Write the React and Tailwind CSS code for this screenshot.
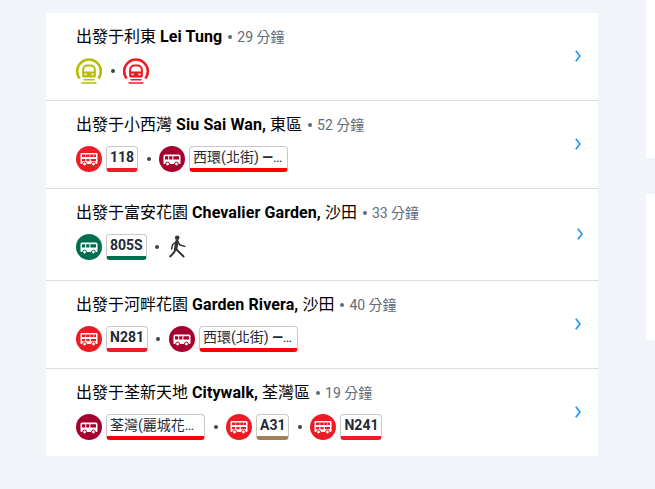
const FONT = "font-['Roboto','Noto_Sans_CJK_TC','Noto_Sans_CJK_SC',sans-serif]";

function MtrIcon({ color }) {
  return (
    <svg width="26" height="26" viewBox="0 0 26 26" fill="none">
      <path d="M3.6 20.5 A11.8 11.8 0 1 1 22.4 20.5" stroke={color} strokeWidth="2.6" />
      <path d="M7.2 15V11.5a4 4 0 0 1 4-4h3.6a4 4 0 0 1 4 4V15" stroke={color} strokeWidth="2" />
      <path d="M6.2 13.6h13.6v4.4a1.6 1.6 0 0 1-1.6 1.6H7.8a1.6 1.6 0 0 1-1.6-1.6z" fill={color} />
      <rect x="8.4" y="15.6" width="2.2" height="1.6" fill="#fff" />
      <rect x="15.4" y="15.6" width="2.2" height="1.6" fill="#fff" />
      <path d="M7.5 21.8h11M5.5 25h15" stroke={color} strokeWidth="1.6" />
    </svg>
  );
}

function DoubleDecker() {
  return (
    <svg width="26" height="26" viewBox="0 0 26 26" className="rounded-full bg-[#ed1c24]">
      <path d="M4.5 8.2a1.2 1.2 0 0 1 1.2-1.2h14.6a1.2 1.2 0 0 1 1.2 1.2v9a.8.8 0 0 1-.8.8H5.3a.8.8 0 0 1-.8-.8z" fill="#fff" />
      <path d="M6 8.6h14v2.4H6zM6 13h3.2v2.2H6zM10.4 13h3.2v2.2h-3.2zM14.8 13H20v2.2h-5.2z" fill="#ed1c24" />
      <path d="M9.6 8.6h.5v2.4h-.5zM13.7 8.6h.5v2.4h-.5zM17.4 8.6h.5v2.4h-.5z" fill="#fff" />
      <circle cx="8.6" cy="18" r="1.9" fill="#fff" stroke="#ed1c24" strokeWidth="1" />
      <circle cx="17.4" cy="18" r="1.9" fill="#fff" stroke="#ed1c24" strokeWidth="1" />
    </svg>
  );
}

function SingleDecker({ color }) {
  return (
    <svg width="26" height="26" viewBox="0 0 26 26" className="rounded-full" style={{ backgroundColor: color }}>
      <path d="M4.5 10a1.6 1.6 0 0 1 1.6-1.6h13.8a1.6 1.6 0 0 1 1.6 1.6v7.2a.8.8 0 0 1-.8.8H5.3a.8.8 0 0 1-.8-.8z" fill="#fff" />
      <path d="M6 10.2h3.2v3.2H6zM10.2 10.2h3.2v3.2h-3.2zM14.4 10.2H20v3.2h-5.6z" fill={color} />
      <circle cx="8.6" cy="18" r="1.9" fill="#fff" stroke={color} strokeWidth="1" />
      <circle cx="17.4" cy="18" r="1.9" fill="#fff" stroke={color} strokeWidth="1" />
    </svg>
  );
}

function Walker() {
  return (
    <svg width="20" height="26" viewBox="0 0 20 26" fill="none" stroke="#333" strokeLinecap="round" strokeLinejoin="round">
      <circle cx="9.2" cy="3.7" r="2.3" fill="#333" stroke="none" />
      <path d="M9 7.5 7.6 15" strokeWidth="3.4" />
      <path d="M7.6 15 6 18.5 2.2 22.5" strokeWidth="1.9" />
      <path d="M8 15 11 18 15.6 22.5" strokeWidth="1.9" />
      <path d="M9.8 8 12 11l4.8 1.4" strokeWidth="1.5" />
      <path d="M8 8 4.6 10.6 3.6 15" strokeWidth="1.5" />
    </svg>
  );
}

function Chip({ children, bar, long }) {
  return (
    <span
      className={`ml-1 block h-[26px] rounded-[4px] border border-[#c9c9c9] border-b-[4px] bg-white px-[3px] text-[14px] leading-[21px] text-[#222b36] ${bar} ${
        long ? "w-[99px] truncate font-normal" : "font-bold"
      }`}
    >
      {children}
    </span>
  );
}

function Dot() {
  return (
    <span className="mx-[8px] flex h-[26px] w-[5px] items-center justify-center">
      <span className="size-[4px] rounded-full bg-[#444]" />
    </span>
  );
}

function Chevron({ nudge }) {
  return (
    <svg
      width="6"
      height="12"
      viewBox="0 0 6 12"
      fill="none"
      className={nudge ? "mr-[15px] mt-[4px]" : "mr-[17px]"}
    >
      <path d="M.8.8 5 6 .8 11.2" stroke="#2196f3" strokeWidth="1.7" />
    </svg>
  );
}

function Row({ place, bold, tail, mins, last, tall, nudge, children }) {
  return (
    <div
      className={`flex items-center justify-between pl-[30px] pt-[14px] ${tall ? "pb-[20px]" : "pb-[16px]"} ${
        last ? "" : "border-b border-[#dcdcdc]"
      }`}
    >
      <div>
        <div className="flex h-[20px] items-center text-[16px] leading-[20px] text-black">
          <span>
            出發于{place} <b className="font-bold tracking-[0.1px]">{bold}</b>
            {tail}
          </span>
          <span className="ml-[6px] mr-[5px] size-[4px] rounded-full bg-[#5f6b78]" />
          <span className="text-[14px] text-[#5f6b78]">{mins} 分鐘</span>
        </div>
        <div className="mt-[11px] flex h-[26px] items-start">{children}</div>
      </div>
      <Chevron nudge={nudge} />
    </div>
  );
}

export default function App() {
  return (
    <div className={`flex h-[489px] w-[655px] overflow-hidden ${FONT}`}>
      <div className="w-[646px] bg-[#f1f5f9] pl-[46px] pr-[48px] pt-[13px]">
        <div className="bg-white">
          <Row place="利東" bold="Lei Tung" mins="29">
            <MtrIcon color="#b5bd00" />
            <Dot />
            <MtrIcon color="#ed1c24" />
          </Row>
          <Row place="小西灣" bold="Siu Sai Wan," tail=" 東區" mins="52">
            <DoubleDecker />
            <Chip bar="border-b-[#ed1c24]">118</Chip>
            <Dot />
            <SingleDecker color="#a6002e" />
            <Chip bar="border-b-[#ff0000]" long>西環(北街) <b>—</b> 小西灣</Chip>
          </Row>
          <Row place="富安花園" bold="Chevalier Garden," tail=" 沙田" mins="33" tall nudge>
            <SingleDecker color="#006f51" />
            <Chip bar="border-b-[#006f51]">805S</Chip>
            <Dot />
            <Walker />
          </Row>
          <Row place="河畔花園" bold="Garden Rivera," tail=" 沙田" mins="40">
            <DoubleDecker />
            <Chip bar="border-b-[#ed1c24]">N281</Chip>
            <Dot />
            <SingleDecker color="#a6002e" />
            <Chip bar="border-b-[#ff0000]" long>西環(北街) <b>—</b> 河畔花園</Chip>
          </Row>
          <Row place="荃新天地" bold="Citywalk," tail=" 荃灣區" mins="19" last>
            <SingleDecker color="#a6002e" />
            <Chip bar="border-b-[#ff0000]" long>荃灣(麗城花園) — 中環</Chip>
            <Dot />
            <DoubleDecker />
            <Chip bar="border-b-[#a08058]">A31</Chip>
            <Dot />
            <DoubleDecker />
            <Chip bar="border-b-[#ed1c24]">N241</Chip>
          </Row>
        </div>
      </div>
      <div className="flex w-[9px] flex-col">
        <div className="h-[158px] bg-white" />
        <div className="h-[36px] bg-[#f1f5f9]" />
        <div className="h-[146px] bg-white" />
        <div className="flex-1 bg-[#f1f5f9]" />
      </div>
    </div>
  );
}
